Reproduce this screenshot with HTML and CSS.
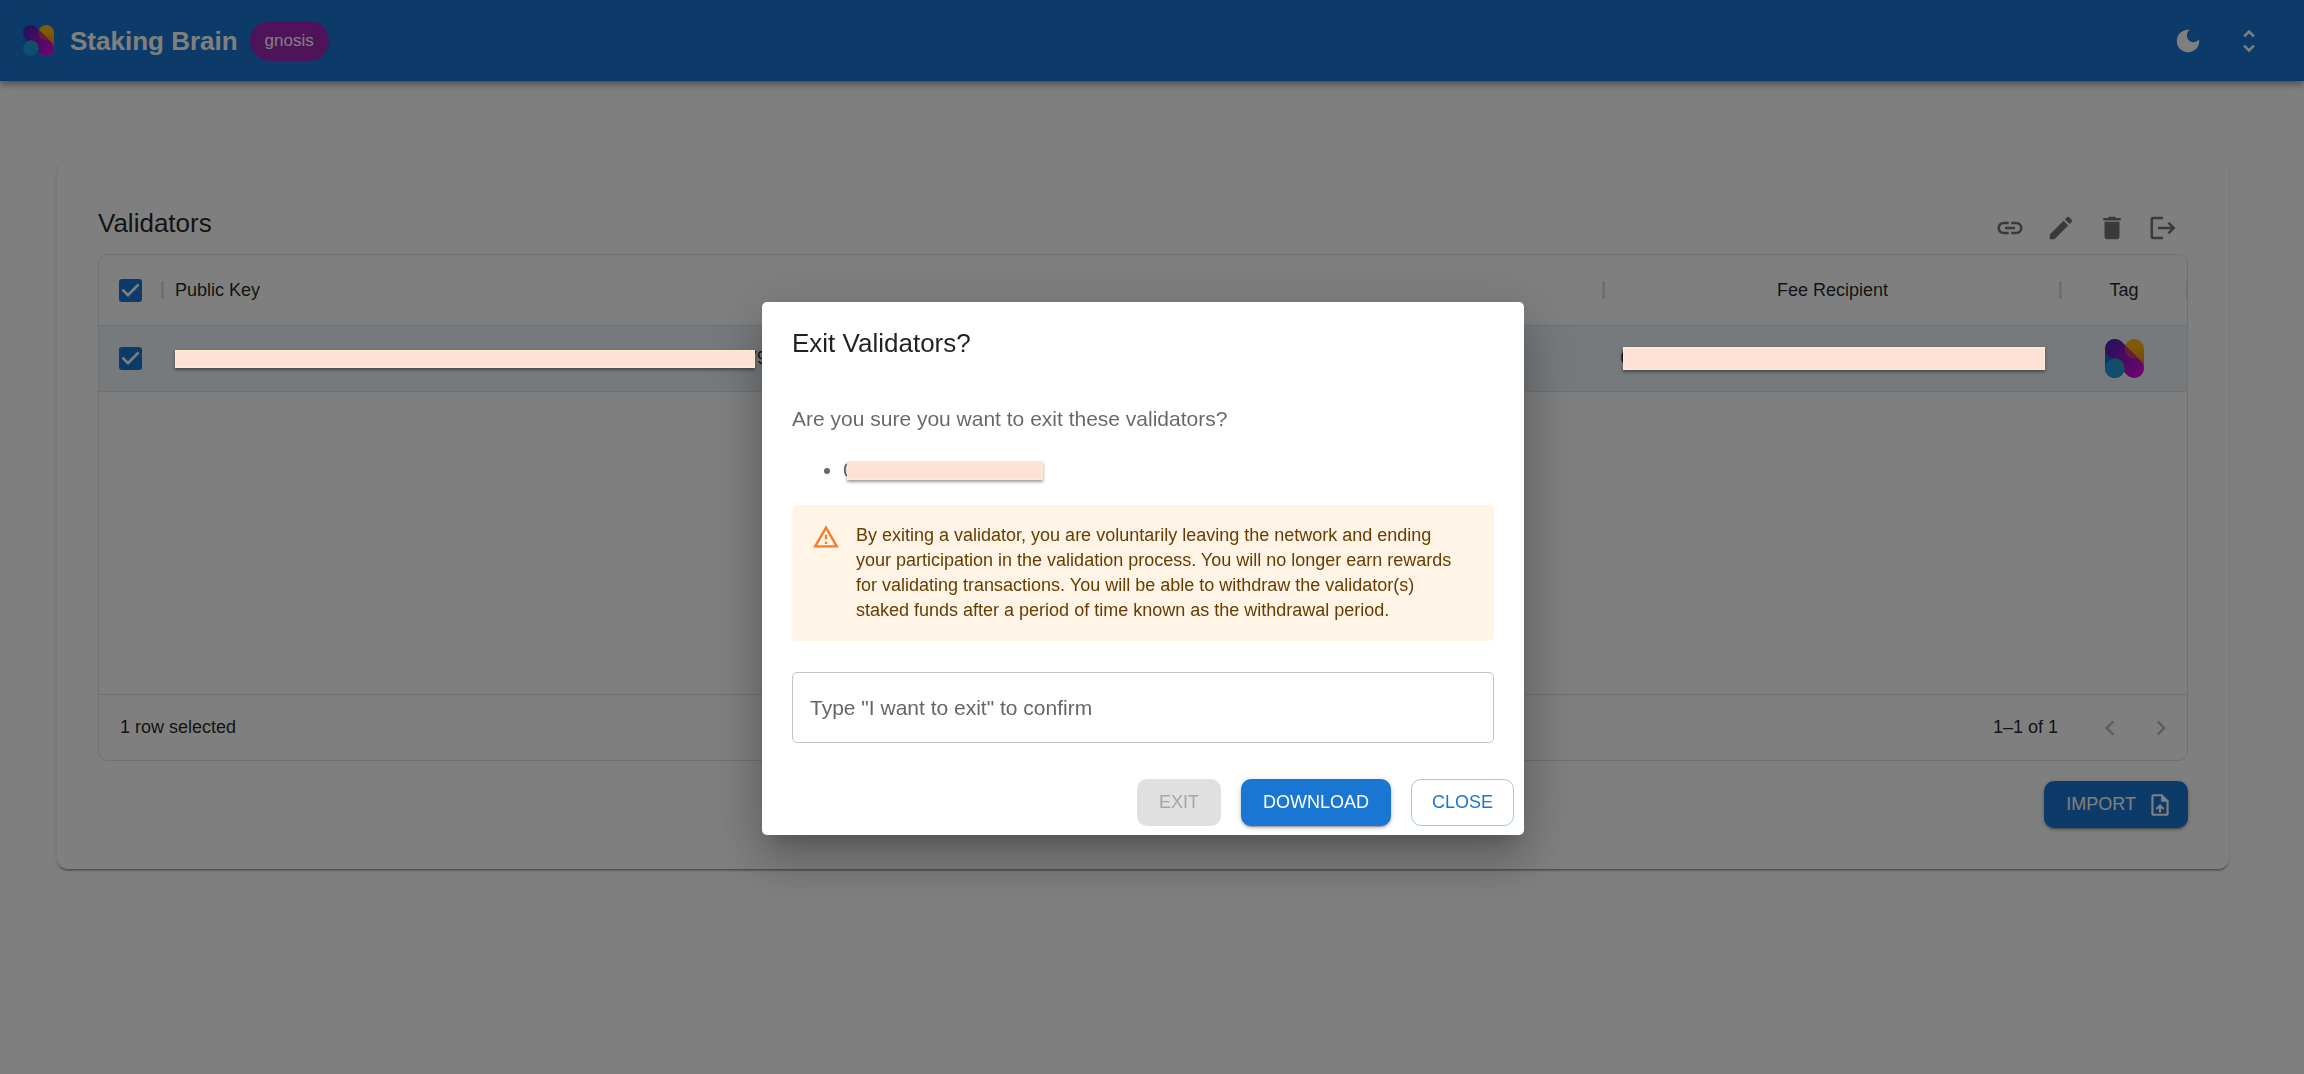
FILE: index.html
```html
<!DOCTYPE html>
<html lang="en">
<head>
  <meta charset="utf-8">
  <title>Staking Brain</title>
  <link rel="stylesheet" href="styles.css">
</head>
<body>
  <svg class="defs" aria-hidden="true">
    <defs>
      <linearGradient id="band" x1="0" y1="0" x2="1" y2="1">
        <stop offset="0.1" stop-color="#4f22b4" />
        <stop offset="0.9" stop-color="#d808e0" />
      </linearGradient>
      <linearGradient id="gold" x1="0" y1="0" x2="0" y2="1">
        <stop offset="0.2" stop-color="#ffb810" />
        <stop offset="0.7" stop-color="#f07a10" />
      </linearGradient>
      <clipPath id="bandClip">
        <path d="M17.07 2.93 37.07 22.93A10 10 0 0 1 22.93 37.07L2.93 17.07A10 10 0 0 1 17.07 2.93z" />
      </clipPath>
    </defs>
    <symbol id="logo" viewBox="0 0 40 40">
      <rect width="20" height="40" rx="10" fill="#0a6ed8" />
      <rect x="20" width="20" height="40" rx="10" fill="url(#gold)" />
      <path d="M17.07 2.93 37.07 22.93A10 10 0 0 1 22.93 37.07L2.93 17.07A10 10 0 0 1 17.07 2.93z" fill="url(#band)" />
      <circle cx="30" cy="10" r="10" fill="#d0386a" clip-path="url(#bandClip)" />
      <circle cx="10" cy="30" r="10" fill="#229ae0" />
      <circle cx="10" cy="30" r="10" fill="#1fa9b8" clip-path="url(#bandClip)" />
    </symbol>
  </svg>

  <header class="appbar">
    <span class="avatar"><svg class="logo-small"><use href="#logo" /></svg></span>
    <h1>Staking Brain</h1>
    <span class="chip">gnosis</span>
    <div class="appbar-actions">
      <button class="icon-btn" aria-label="Dark mode">
        <svg viewBox="0 0 24 24"><path d="M12 3c-4.97 0-9 4.03-9 9s4.03 9 9 9 9-4.03 9-9c0-.46-.04-.92-.1-1.36-.98 1.37-2.58 2.26-4.4 2.26-2.98 0-5.4-2.42-5.4-5.4 0-1.81.89-3.42 2.26-4.4-.44-.06-.9-.1-1.36-.1z" /></svg>
      </button>
      <button class="icon-btn" aria-label="Expand">
        <svg viewBox="0 0 24 24"><path d="M12 5.83 15.17 9l1.41-1.41L12 3 7.41 7.59 8.83 9 12 5.83zm0 12.34L8.83 15l-1.41 1.41L12 21l4.59-4.59L15.17 15 12 18.17z" /></svg>
      </button>
    </div>
  </header>

  <main>
    <section class="card">
      <div class="card-head">
        <h2>Validators</h2>
        <div class="tools">
          <button class="icon-btn" aria-label="Link">
            <svg viewBox="0 0 24 24"><path d="M17 7h-4v2h4c1.65 0 3 1.35 3 3s-1.35 3-3 3h-4v2h4c2.76 0 5-2.24 5-5s-2.24-5-5-5zm-6 8H7c-1.65 0-3-1.35-3-3s1.35-3 3-3h4V7H7c-2.76 0-5 2.24-5 5s2.24 5 5 5h4v-2zm-3-4h8v2H8z" /></svg>
          </button>
          <button class="icon-btn" aria-label="Edit">
            <svg viewBox="0 0 24 24"><path d="M3 17.25V21h3.75L17.81 9.94l-3.75-3.75L3 17.25zM20.71 7.04c.39-.39.39-1.02 0-1.41l-2.34-2.34a1 1 0 0 0-1.41 0l-1.83 1.83 3.75 3.75 1.83-1.83z" /></svg>
          </button>
          <button class="icon-btn" aria-label="Delete">
            <svg viewBox="0 0 24 24"><path d="M6 19c0 1.1.9 2 2 2h8c1.1 0 2-.9 2-2V7H6v12zM19 4h-3.5l-1-1h-5l-1 1H5v2h14V4z" /></svg>
          </button>
          <button class="icon-btn" aria-label="Exit">
            <svg viewBox="0 0 24 24"><path d="m17 7-1.41 1.41L18.17 11H8v2h10.17l-2.58 2.58L17 17l5-5zM4 5h8V3H4c-1.1 0-2 .9-2 2v14c0 1.1.9 2 2 2h8v-2H4V5z" /></svg>
          </button>
        </div>
      </div>

      <div class="grid">
        <div class="grid-body">
          <table>
            <colgroup>
              <col class="col-check">
              <col>
              <col class="col-fee">
              <col class="col-tag">
            </colgroup>
            <thead>
              <tr>
                <th class="check"><input type="checkbox" aria-label="Select all rows" checked></th>
                <th class="key">Public Key</th>
                <th>Fee Recipient</th>
                <th>Tag</th>
              </tr>
            </thead>
            <tbody>
              <tr>
                <td class="check"><input type="checkbox" aria-label="Select row" checked></td>
                <td class="key"><div class="cell"><span class="mask mask-key"></span><span class="tail">79</span></div></td>
                <td><div class="cell cell-fee"><span>0</span><span class="mask mask-fee"></span></div></td>
                <td><svg class="logo-tag"><use href="#logo" /></svg></td>
              </tr>
            </tbody>
          </table>
        </div>
        <div class="grid-foot">
          <span>1 row selected</span>
          <div class="pager">
            <span>1–1 of 1</span>
            <div class="tools">
              <button class="icon-btn" aria-label="Previous page" disabled>
                <svg viewBox="0 0 24 24"><path d="M15.41 16.59 10.83 12l4.58-4.59L14 6l-6 6 6 6z" /></svg>
              </button>
              <button class="icon-btn" aria-label="Next page" disabled>
                <svg viewBox="0 0 24 24"><path d="M8.59 16.59 13.17 12 8.59 7.41 10 6l6 6-6 6z" /></svg>
              </button>
            </div>
          </div>
        </div>
      </div>

      <div class="card-foot">
        <button class="btn btn-primary btn-import">IMPORT
          <svg viewBox="0 0 24 24"><path d="M14 2H6c-1.1 0-1.99.9-1.99 2L4 20c0 1.1.89 2 1.99 2H18c1.1 0 2-.9 2-2V8l-6-6zm4 18H6V4h7v5h5v11zM8 15.01l1.41 1.41L11 14.84V19h2v-4.16l1.59 1.59L16 15.01 12.01 11 8 15.01z" /></svg>
        </button>
      </div>
    </section>
  </main>

  <div class="overlay">
    <div class="dialog" role="dialog" aria-labelledby="dialogTitle">
      <h2 id="dialogTitle">Exit Validators?</h2>
      <div class="dialog-body">
        <p>Are you sure you want to exit these validators?</p>
        <ul>
          <li><div class="cell"><span>0</span><span class="mask mask-item"></span></div></li>
        </ul>
        <div class="alert">
          <svg viewBox="0 0 24 24"><path d="M12 5.99 19.53 19H4.47L12 5.99M12 2 1 21h22L12 2zm1 14h-2v2h2v-2zm0-6h-2v4h2v-4z" /></svg>
          <div>By exiting a validator, you are voluntarily leaving the network and ending your participation in the validation process. You will no longer earn rewards for validating transactions. You will be able to withdraw the validator(s) staked funds after a period of time known as the withdrawal period.</div>
        </div>
        <input type="text" id="confirmText" aria-label="Confirmation" placeholder='Type "I want to exit" to confirm'>
      </div>
      <div class="dialog-actions">
        <button class="btn" disabled>EXIT</button>
        <button class="btn btn-primary">DOWNLOAD</button>
        <button class="btn btn-outline">CLOSE</button>
      </div>
    </div>
  </div>
</body>
</html>
```
FILE: styles.css
```css
* { box-sizing: border-box; }
body { margin: 0; min-height: 100vh; background: #fff; color: rgba(0,0,0,0.87); font-family: "Liberation Sans", Arial, sans-serif; font-size: 18px; }
h1, h2, p, ul { margin: 0; }
h2 { font-size: 26px; line-height: 40px; font-weight: normal; }
svg { fill: currentColor; flex: none; }
button, input { font-family: inherit; }
.defs { position: absolute; width: 0; height: 0; }

/* top bar */
.appbar { display: flex; align-items: center; height: 81px; padding: 0 30px 0 6px; background: #1976d2; color: #fff; box-shadow: 0 3px 5px -1px rgba(0,0,0,0.2), 0 5px 6px rgba(0,0,0,0.14), 0 1px 13px rgba(0,0,0,0.12); }
.appbar h1 { margin-right: 12px; font-size: 26px; line-height: 40px; }
.avatar { display: flex; align-items: center; justify-content: center; width: 64px; height: 64px; border: 1px solid #1870c8; border-radius: 50%; }
.logo-small { width: 31px; height: 31px; }
.chip { height: 40px; padding: 0 15px; border-radius: 20px; background: #9c27b0; font-size: 17px; line-height: 40px; }
.appbar-actions { display: flex; gap: 11px; margin-left: auto; }
.icon-btn { display: flex; padding: 10px; border: 0; background: none; color: inherit; }
.icon-btn svg { width: 30px; height: 30px; }

/* validators card */
main { padding: 81px 75px 81px 57px; }
.card { padding: 41px; border-radius: 10px; background: #fff; box-shadow: 0 3px 1px -1px rgba(0,0,0,0.2), 0 1px 1px rgba(0,0,0,0.14), 0 1px 4px rgba(0,0,0,0.12); }
.card-head { display: flex; justify-content: space-between; align-items: flex-start; margin-bottom: 1px; }
.tools { display: flex; gap: 1px; color: rgba(0,0,0,0.54); }
.card-foot { display: flex; justify-content: flex-end; margin-top: 20px; }

.grid { border: 1px solid #e0e0e0; border-radius: 10px; }
.grid-body { min-height: 439px; }
table { width: 100%; table-layout: fixed; border-collapse: separate; border-spacing: 0; }
.col-check { width: 64px; }
.col-fee { width: 457px; }
.col-tag { width: 126px; }
th, td { padding: 0; border-bottom: 1px solid #e0e0e0; font-weight: normal; text-align: center; }
th { position: relative; height: 71px; }
th::after { content: ""; position: absolute; top: 26px; right: -1px; width: 3px; height: 18px; background: #e0e0e0; }
th:last-child::after { width: 2px; }
td { height: 66px; background: #edf4fb; }
th.key, td.key { padding-left: 12px; text-align: left; }
input[type=checkbox] { appearance: none; display: block; width: 23px; height: 23px; margin: 0 0 0 20px; border-radius: 3px; background: #1976d2 url("data:image/svg+xml,%3Csvg xmlns='http://www.w3.org/2000/svg' viewBox='3 3 18 18'%3E%3Cpath fill='white' d='M10 17l-5-5 1.41-1.41L10 14.17l7.59-7.59L19 8l-9 9z'/%3E%3C/svg%3E"); }
.logo-tag { display: block; width: 39px; height: 39px; margin: auto; }

/* hidden keys, kept bright above the backdrop */
.cell { display: flex; align-items: center; }
.cell-fee { justify-content: center; }
.mask { position: relative; z-index: 20; margin-left: -8px; border: 1px solid #ffecd0; background: #fee2d6; box-shadow: 0 2px 3px rgba(0,0,0,0.4); }
.mask-key { width: 580px; height: 18px; margin-left: 0; }
.mask-fee { width: 422px; height: 23px; }
.mask-item { width: 196px; height: 19px; }
.tail { margin-left: -8px; }

.grid-foot { display: flex; justify-content: space-between; align-items: center; height: 66px; padding: 0 1px 0 21px; border-top: 1px solid #e0e0e0; }
.pager { display: flex; align-items: center; gap: 27px; }
.pager .icon-btn { color: rgba(0,0,0,0.27); }

/* buttons */
.btn { display: flex; align-items: center; height: 47px; padding: 0 22px; border: 0; border-radius: 10px; font-size: 18px; }
.btn:disabled { background: #e0e0e0; color: #a6a6a6; }
.btn-primary { background: #1976d2; color: #fff; box-shadow: 0 3px 1px -2px rgba(0,0,0,0.2), 0 2px 3px rgba(0,0,0,0.2), 0 1px 6px rgba(0,0,0,0.12); }
.btn-outline { padding: 0 20px; border: 1px solid #a3c8ed; background: none; color: #1976d2; }
.btn-import { gap: 11px; padding-right: 15px; }
.btn-import svg { width: 26px; height: 26px; }

/* exit dialog */
.overlay { position: fixed; inset: 0; z-index: 10; padding: 302px 18px 0 0; background: rgba(0,0,0,0.5); }
.dialog { width: 100%; max-width: 762px; margin: 0 auto; border-radius: 5px; background: #fff; box-shadow: 0 14px 19px -9px rgba(0,0,0,0.2), 0 30px 48px 4px rgba(0,0,0,0.14), 0 11px 58px 10px rgba(0,0,0,0.12); }
.dialog h2 { padding: 21px 30px 20px; }
.dialog-body { display: flex; flex-direction: column; padding: 21px 30px 36px; color: rgba(0,0,0,0.6); font-size: 21px; line-height: 30px; }
.dialog-body ul { margin: 21px 0 20px; padding-left: 51px; }
.alert { display: flex; gap: 16px; padding: 18px 30px 18px 20px; border-radius: 5px; background: #fff4e5; color: #663c00; font-size: 18px; line-height: 25px; }
.alert svg { width: 28px; height: 28px; color: #f57c2c; }
.dialog-body input { height: 71px; margin-top: 31px; padding: 0 17px; border: 1px solid #c4c4c4; border-radius: 5px; font-size: 21px; }
.dialog-body input::placeholder { color: #666; opacity: 1; }
.dialog-actions { display: flex; justify-content: flex-end; gap: 20px; padding: 0 10px 9px; }
```
